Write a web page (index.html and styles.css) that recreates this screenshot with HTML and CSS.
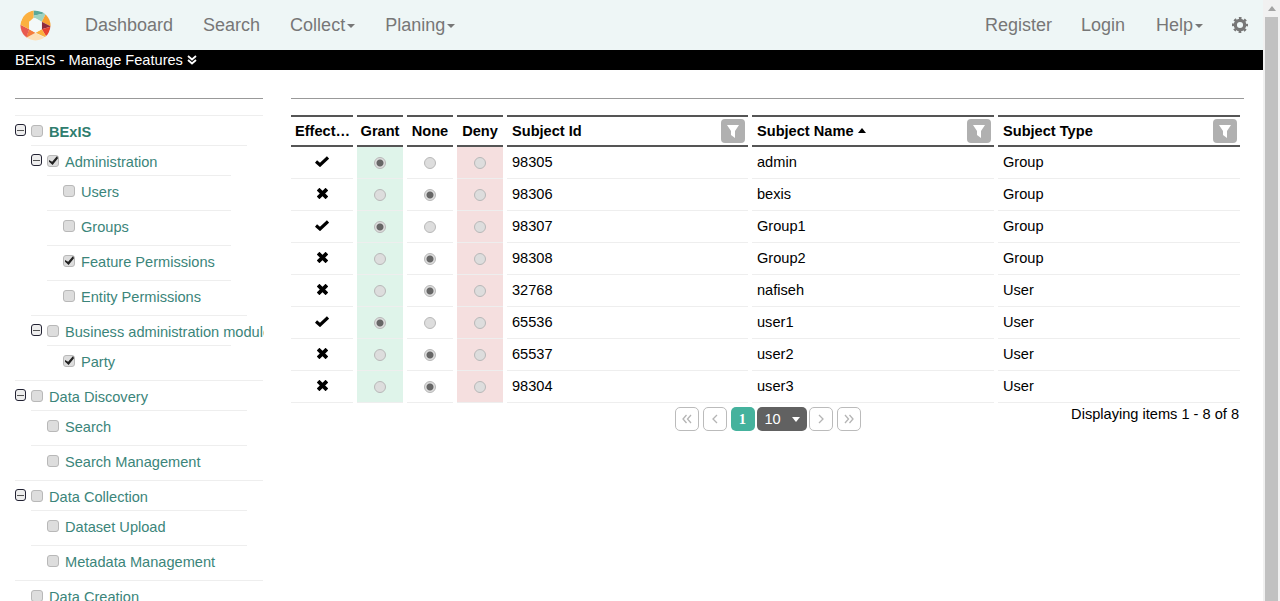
FILE: index.html
```html
<!DOCTYPE html>
<html>
<head>
  <meta charset="UTF-8">
  <title>BExIS - Manage Features</title>
  <link rel="stylesheet" href="styles.css">
</head>
<body>
  <svg class="sprite">
    <symbol id="i-ok" viewBox="0 0 14 11"><polyline points="1,5.5 5,9 13,1.5" fill="none" stroke="#000" stroke-width="3.200"/></symbol>
    <symbol id="i-no" viewBox="0 0 10 10"><path d="M1 1L9 9M9 1L1 9" fill="none" stroke="#000" stroke-width="3.400"/></symbol>
    <symbol id="i-filter" viewBox="0 0 24 24"><path d="M6 6H18L14 12V19L10 16V12Z" fill="#fff"/></symbol>
    <symbol id="i-first" viewBox="0 0 12 12"><path d="M5.5 2L2 6L5.5 10M10 2L6.500 6L10 10" fill="none" stroke="#b4b4b4" stroke-width="1.300"/></symbol>
    <symbol id="i-prev" viewBox="0 0 12 12"><path d="M8 2L4 6L8 10" fill="none" stroke="#b4b4b4" stroke-width="1.300"/></symbol>
    <symbol id="i-next" viewBox="0 0 12 12"><path d="M4 2L8 6L4 10" fill="none" stroke="#b4b4b4" stroke-width="1.300"/></symbol>
    <symbol id="i-last" viewBox="0 0 12 12"><path d="M2 2L5.500 6L2 10M6.500 2L10 6L6.500 10" fill="none" stroke="#b4b4b4" stroke-width="1.300"/></symbol>
  </svg>

  <div class="page">
    <nav class="navbar">
      <svg class="logo" viewBox="0 0 32 32">
        <defs><clipPath id="logo-clip"><circle cx="16" cy="16" r="15.500"/></clipPath></defs>
        <g clip-path="url(#logo-clip)">
          <polygon points="14,0 27,3 14,6" fill="#5aa898"/>
          <polygon points="14,6 27,3 22.500,12.250 16,8.500 14,8" fill="#9fd3c0"/>
          <polygon points="27,3 32,8 32,17 22.500,12.250" fill="#f99f2e"/>
          <polygon points="22.500,12.250 32,17 22.500,19.750" fill="#8e2b3c"/>
          <polygon points="32,17 28,29 22.500,19.750" fill="#e84430"/>
          <polygon points="22.500,19.750 28,29 16,23.500" fill="#fbb03b"/>
          <polygon points="6,29 16,23.500 26,29 16,33" fill="#fde0b8"/>
          <polygon points="9.500,19.750 16,23.500 6,29" fill="#f57c3c"/>
          <polygon points="0,15 9.500,19.750 6,30 0,26" fill="#e85a4f"/>
          <polygon points="0,15 9.500,19.750 9.500,12.250 14,8 14,0 4,4" fill="#fbb040"/>
          <polygon points="16,8.500 22.500,12.250 22.500,19.750 16,23.500 9.500,19.750 9.500,12.250" fill="#f4f9f9"/>
        </g>
      </svg>
      <a class="nav-link">Dashboard</a>
      <a class="nav-link">Search</a>
      <a class="nav-link">Collect<span class="caret"></span></a>
      <a class="nav-link">Planing<span class="caret"></span></a>
      <span class="nav-space"></span>
      <a class="nav-link">Register</a>
      <a class="nav-link nav-login">Login</a>
      <a class="nav-link">Help<span class="caret"></span></a>
      <svg class="gear" viewBox="0 0 20 20">
        <circle cx="10" cy="10" r="5.200" fill="none" stroke="#777" stroke-width="3.600"/>
        <circle cx="10" cy="10" r="7.700" fill="none" stroke="#777" stroke-width="2.400" stroke-dasharray="3 3.050" stroke-dashoffset="1.500"/>
      </svg>
    </nav>

    <div class="titlebar">
      <span>BExIS - Manage Features</span>
      <svg class="title-icon" viewBox="0 0 10 10"><path d="M1 1L5 4.500L9 1M1 5L5 8.500L9 5" fill="none" stroke="#fff" stroke-width="1.800"/></svg>
    </div>

    <div class="content">
      <aside class="sidebar">
        <hr class="rule">
        <ul class="tree root">
          <li>
            <div class="row parent"><span class="toggle"></span><input type="checkbox"><b class="label-root">BExIS</b></div>
            <ul class="tree">
              <li>
                <div class="row parent"><span class="toggle"></span><input type="checkbox" checked><span>Administration</span></div>
                <ul class="tree">
                  <li><div class="row"><input type="checkbox"><span>Users</span></div></li>
                  <li><div class="row"><input type="checkbox"><span>Groups</span></div></li>
                  <li><div class="row"><input type="checkbox" checked><span>Feature Permissions</span></div></li>
                  <li><div class="row"><input type="checkbox"><span>Entity Permissions</span></div></li>
                </ul>
              </li>
              <li>
                <div class="row parent"><span class="toggle"></span><input type="checkbox"><span>Business administration module</span></div>
                <ul class="tree">
                  <li><div class="row"><input type="checkbox" checked><span>Party</span></div></li>
                </ul>
              </li>
            </ul>
          </li>
          <li>
            <div class="row parent"><span class="toggle"></span><input type="checkbox"><span>Data Discovery</span></div>
            <ul class="tree">
              <li><div class="row"><input type="checkbox"><span>Search</span></div></li>
              <li><div class="row"><input type="checkbox"><span>Search Management</span></div></li>
            </ul>
          </li>
          <li>
            <div class="row parent"><span class="toggle"></span><input type="checkbox"><span>Data Collection</span></div>
            <ul class="tree">
              <li><div class="row"><input type="checkbox"><span>Dataset Upload</span></div></li>
              <li><div class="row"><input type="checkbox"><span>Metadata Management</span></div></li>
            </ul>
          </li>
          <li>
            <div class="row parent"><input type="checkbox"><span>Data Creation</span></div>
          </li>
        </ul>
      </aside>

      <main class="main">
        <hr class="rule">
        <table class="grid">
          <colgroup>
            <col class="c-effect"><col class="c-radio"><col class="c-radio"><col class="c-radio">
            <col class="c-id"><col class="c-name"><col class="c-name">
          </colgroup>
          <thead>
            <tr>
              <th class="center"><div class="clip">Effective</div></th>
              <th class="center">Grant</th>
              <th class="center">None</th>
              <th class="center">Deny</th>
              <th><div class="th-in"><span>Subject Id</span><button class="filter"><svg><use href="#i-filter"/></svg></button></div></th>
              <th><div class="th-in"><span>Subject Name<span class="sort"></span></span><button class="filter"><svg><use href="#i-filter"/></svg></button></div></th>
              <th><div class="th-in"><span>Subject Type</span><button class="filter"><svg><use href="#i-filter"/></svg></button></div></th>
            </tr>
          </thead>
          <tbody>
            <tr>
              <td class="center"><svg class="ok"><use href="#i-ok"/></svg></td>
              <td class="center grant"><input type="radio" name="r1" checked></td>
              <td class="center"><input type="radio" name="r1"></td>
              <td class="center deny"><input type="radio" name="r1"></td>
              <td>98305</td><td>admin</td><td>Group</td>
            </tr>
            <tr>
              <td class="center"><svg class="no"><use href="#i-no"/></svg></td>
              <td class="center grant"><input type="radio" name="r2"></td>
              <td class="center"><input type="radio" name="r2" checked></td>
              <td class="center deny"><input type="radio" name="r2"></td>
              <td>98306</td><td>bexis</td><td>Group</td>
            </tr>
            <tr>
              <td class="center"><svg class="ok"><use href="#i-ok"/></svg></td>
              <td class="center grant"><input type="radio" name="r3" checked></td>
              <td class="center"><input type="radio" name="r3"></td>
              <td class="center deny"><input type="radio" name="r3"></td>
              <td>98307</td><td>Group1</td><td>Group</td>
            </tr>
            <tr>
              <td class="center"><svg class="no"><use href="#i-no"/></svg></td>
              <td class="center grant"><input type="radio" name="r4"></td>
              <td class="center"><input type="radio" name="r4" checked></td>
              <td class="center deny"><input type="radio" name="r4"></td>
              <td>98308</td><td>Group2</td><td>Group</td>
            </tr>
            <tr>
              <td class="center"><svg class="no"><use href="#i-no"/></svg></td>
              <td class="center grant"><input type="radio" name="r5"></td>
              <td class="center"><input type="radio" name="r5" checked></td>
              <td class="center deny"><input type="radio" name="r5"></td>
              <td>32768</td><td>nafiseh</td><td>User</td>
            </tr>
            <tr>
              <td class="center"><svg class="ok"><use href="#i-ok"/></svg></td>
              <td class="center grant"><input type="radio" name="r6" checked></td>
              <td class="center"><input type="radio" name="r6"></td>
              <td class="center deny"><input type="radio" name="r6"></td>
              <td>65536</td><td>user1</td><td>User</td>
            </tr>
            <tr>
              <td class="center"><svg class="no"><use href="#i-no"/></svg></td>
              <td class="center grant"><input type="radio" name="r7"></td>
              <td class="center"><input type="radio" name="r7" checked></td>
              <td class="center deny"><input type="radio" name="r7"></td>
              <td>65537</td><td>user2</td><td>User</td>
            </tr>
            <tr>
              <td class="center"><svg class="no"><use href="#i-no"/></svg></td>
              <td class="center grant"><input type="radio" name="r8"></td>
              <td class="center"><input type="radio" name="r8" checked></td>
              <td class="center deny"><input type="radio" name="r8"></td>
              <td>98304</td><td>user3</td><td>User</td>
            </tr>
          </tbody>
        </table>

        <div class="pager-bar">
          <span></span>
          <div class="pager">
            <a class="pg"><svg><use href="#i-first"/></svg></a>
            <a class="pg"><svg><use href="#i-prev"/></svg></a>
            <a class="pg-current">1</a>
            <div class="pg-size">10<span class="pg-caret"></span></div>
            <a class="pg"><svg><use href="#i-next"/></svg></a>
            <a class="pg"><svg><use href="#i-last"/></svg></a>
          </div>
          <div class="pager-info">Displaying items 1 - 8 of 8</div>
        </div>
      </main>
    </div>
  </div>

  <div class="scrollbar">
    <div class="scroll-up"></div>
    <div class="scroll-thumb"></div>
  </div>
</body>
</html>
```

FILE: styles.css
```css
* {
  box-sizing: border-box;
}

html, body {
  height: 601px;
  margin: 0;
  overflow: hidden;
}

body {
  display: flex;
  background-color: #fff;
  color: #000;
  font-family: "Liberation Sans", Arial, sans-serif;
  font-size: 14.6px;
}

.sprite {
  display: none;
}

.page {
  width: 1263px;
  height: 601px;
  overflow: hidden;
}

/* top bar */
.navbar {
  display: flex;
  align-items: center;
  gap: 30px;
  height: 50px;
  padding: 0 14px 0 20px;
  background-color: #eef6f6;
}

.logo {
  width: 31px;
  height: 31px;
  margin-right: 4px;
}

.nav-link {
  color: #777;
  font-size: 18px;
}

.nav-login {
  margin: 0 1px 0 -1px;
}

.nav-space {
  flex: 1;
}

.caret {
  display: inline-block;
  margin-left: 2px;
  vertical-align: middle;
  border-top: 4px solid #777;
  border-left: 4px solid transparent;
  border-right: 4px solid transparent;
}

.gear {
  width: 18px;
  height: 18px;
  margin-left: -2px;
}

.titlebar {
  display: flex;
  align-items: center;
  gap: 4px;
  height: 20px;
  padding: 0 0 1px 15px;
  background-color: #000;
  color: #fff;
  font-size: 14.6px;
}

.title-icon {
  width: 10px;
  height: 10px;
}

/* page body */
.content {
  display: flex;
  gap: 28px;
  padding: 28px 19px 0 15px;
}

.rule {
  height: 1px;
  margin: 0 0 16px;
  border: 0;
  background-color: #999;
}

.sidebar {
  flex: 0 0 248px;
  width: 248px;
}

/* feature tree */
.tree {
  margin: 0 16px;
  padding: 0;
  list-style: none;
}

.tree.root {
  width: 249px;
  margin: 0;
  overflow: hidden;
}

.tree.root > li {
  width: 248px;
}

.tree li {
  border-top: 1px solid #eee;
}

.row {
  display: flex;
  align-items: flex-start;
  height: 34px;
  padding: 8px 0 0 16px;
  color: #3b857a;
  font-size: 14.6px;
  line-height: 17px;
  white-space: nowrap;
}

.row.parent {
  height: 29px;
}

.row span:last-child, .label-root {
  margin-left: 6px;
}

.label-root {
  color: #2f7d6e;
}

.toggle {
  flex: 0 0 11px;
  width: 11px;
  height: 12px;
  margin: 0 5px 0 -16px;
  border: 1px solid #223;
  border-radius: 3px;
  background-color: #eee;
  background-image: linear-gradient(#555, #555);
  background-repeat: no-repeat;
  background-size: 7px 1px;
  background-position: center;
}

input[type="checkbox"], input[type="radio"] {
  position: relative;
  appearance: none;
  flex: 0 0 12px;
  width: 12px;
  height: 12px;
  margin: 1px 0 0;
  border: 1px solid #b8b8b8;
  background-color: #ddd;
}

input[type="checkbox"] {
  border-radius: 3px;
}

input[type="checkbox"]:checked::after {
  content: "";
  position: absolute;
  left: 1px;
  top: 0;
  width: 9px;
  height: 9px;
  background-color: #222;
  clip-path: polygon(0 45%, 35% 65%, 90% 0, 100% 25%, 40% 100%, 0 65%);
}

input[type="radio"] {
  margin: 0;
  border-radius: 50%;
  vertical-align: middle;
}

input[type="radio"]:checked {
  background-image: radial-gradient(circle, #666 0, #666 3px, #ddd 4px);
}

/* permissions table */
.main {
  flex: 0 0 953px;
  width: 953px;
}

.grid {
  width: 957px;
  margin-left: -4px;
  border-collapse: separate;
  border-spacing: 4px 0;
  table-layout: fixed;
}

.c-effect { width: 62px; }
.c-radio { width: 46px; }
.c-id { width: 241px; }
.c-name { width: 242px; }

.grid th {
  height: 32px;
  padding: 0 3px 0 5px;
  border-top: 2px solid #555;
  border-bottom: 2px solid #555;
  font-weight: bold;
  text-align: left;
}

.grid th.center {
  padding: 0;
  text-align: center;
}

.clip {
  padding: 0 2px 0 4px;
  overflow: hidden;
  text-overflow: ellipsis;
  white-space: nowrap;
}

.th-in {
  display: flex;
  align-items: center;
  justify-content: space-between;
}

.sort {
  display: inline-block;
  margin-left: 4px;
  vertical-align: 3px;
  border-bottom: 5px solid #000;
  border-left: 4.500px solid transparent;
  border-right: 4.500px solid transparent;
}

.filter {
  width: 24px;
  height: 24px;
  padding: 0;
  border: 0;
  border-radius: 4px;
  background-color: #b0b0b0;
}

.filter svg {
  display: block;
  width: 24px;
  height: 24px;
}

.grid td {
  height: 32px;
  padding: 0 5px 2px;
  border-bottom: 1px solid #eee;
}

.grid td.center {
  padding: 0 0 2px;
  text-align: center;
}

.grant {
  background-color: #dff4ea;
}

.deny {
  background-color: #f5dfdf;
}

.ok {
  display: block;
  width: 14px;
  height: 11px;
  margin: 0 auto;
}

.no {
  display: block;
  width: 11px;
  height: 11px;
  margin: 0 auto;
}

/* pager */
.pager-bar {
  display: grid;
  grid-template-columns: 1fr auto 1fr;
  padding-top: 3px;
}

.pager {
  display: flex;
  gap: 4px;
  margin-top: 1px;
}

.pg, .pg-current {
  display: flex;
  align-items: center;
  justify-content: center;
  width: 24px;
  height: 24px;
  border-radius: 5px;
}

.pg {
  border: 1px solid #bbb;
}

.pg svg {
  width: 12px;
  height: 12px;
}

.pg-current {
  background-color: #45b29d;
  color: #fff;
  font-family: "Liberation Serif", serif;
  font-weight: bold;
}

.pg-size {
  display: flex;
  align-items: center;
  justify-content: space-between;
  width: 50px;
  height: 24px;
  margin: 0 -2px;
  padding: 0 7px 0 8px;
  border-radius: 5px;
  background-color: #616161;
  color: #fff;
}

.pg-caret {
  border-top: 5px solid #fff;
  border-left: 4.500px solid transparent;
  border-right: 4.500px solid transparent;
}

.pager-info {
  padding-right: 5px;
  text-align: right;
}

/* fake scrollbar, the window shows one in the reference */
.scrollbar {
  display: flex;
  flex-direction: column;
  align-items: center;
  width: 17px;
  height: 601px;
  padding-top: 6px;
  background-color: #f1f1f1;
}

.scroll-up {
  margin-bottom: 6px;
  border-bottom: 5px solid #a3a3a3;
  border-left: 4px solid transparent;
  border-right: 4px solid transparent;
}

.scroll-thumb {
  flex: 1;
  width: 13px;
  background-color: #c1c1c1;
}
```
